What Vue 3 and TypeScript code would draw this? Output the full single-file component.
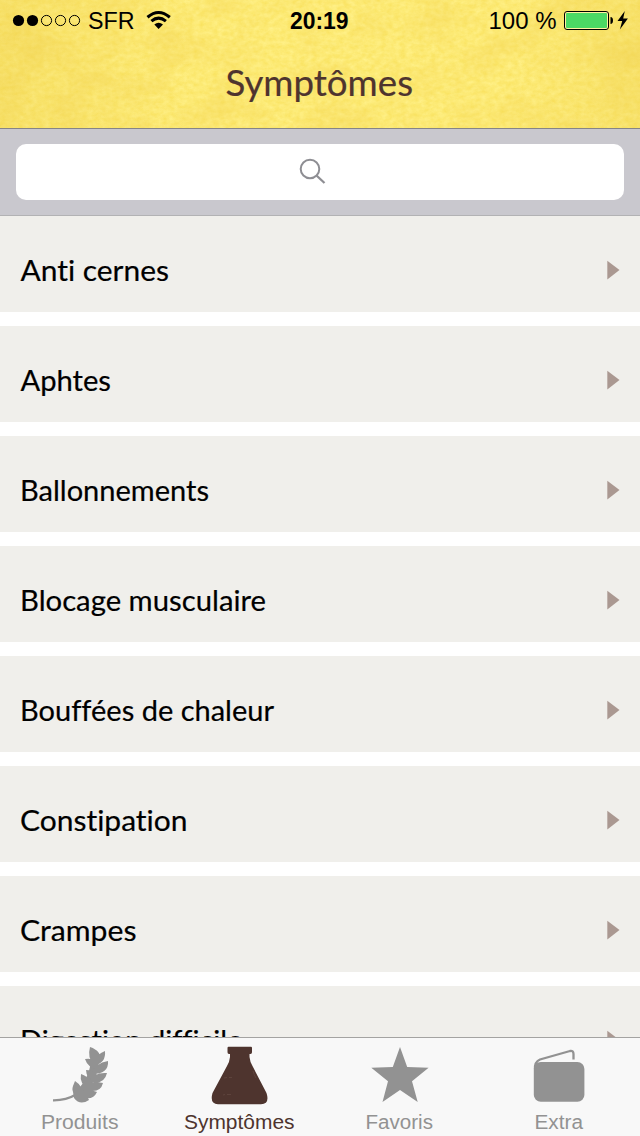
<script setup lang="ts">
interface Row {
  label: string
  x: number
  width: number
}

const rows: Row[] = [
  { label: 'Anti cernes', x: 20.5, width: 148.5 },
  { label: 'Aphtes', x: 20.5, width: 90.5 },
  { label: 'Ballonnements', x: 20, width: 189 },
  { label: 'Blocage musculaire', x: 20, width: 246 },
  { label: 'Bouffées de chaleur', x: 20, width: 254 },
  { label: 'Constipation', x: 20, width: 167.5 },
  { label: 'Crampes', x: 20, width: 116.5 },
  { label: 'Digestion difficile', x: 20, width: 222.5 },
]
</script>

<template>
  <div class="screen">
    <header class="header">
      <svg class="paper" width="640" height="128" aria-hidden="true">
        <defs>
          <filter id="grain" x="0" y="0" width="100%" height="100%" color-interpolation-filters="sRGB">
            <feTurbulence type="fractalNoise" baseFrequency="0.16 0.22" numOctaves="4" seed="8" />
            <feColorMatrix values="0.03 0 0 0 0.975  0.07 0 0 0 0.883  0.2 0 0 0 0.36  0 0 0 0 1" />
          </filter>
          <filter id="mottle" x="0" y="0" width="100%" height="100%" color-interpolation-filters="sRGB">
            <feTurbulence type="fractalNoise" baseFrequency="0.02 0.03" numOctaves="4" seed="3" />
            <feColorMatrix values="0 0 0 0 0.95  0 0 0 0 0.83  0 0 0 0 0.33  0.9 0 0 0 -0.38" />
          </filter>
          <linearGradient id="edges">
            <stop offset="0" stop-color="#e9c845" stop-opacity=".28" />
            <stop offset=".3" stop-color="#e9c845" stop-opacity="0" />
            <stop offset=".8" stop-color="#e9c845" stop-opacity="0" />
            <stop offset="1" stop-color="#e9c845" stop-opacity=".28" />
          </linearGradient>
        </defs>
        <rect width="640" height="128" filter="url(#grain)" />
        <rect width="640" height="128" filter="url(#mottle)" />
        <rect width="640" height="128" fill="url(#edges)" />
      </svg>
      <svg class="status" width="640" height="40" viewBox="0 0 640 40">
        <circle cx="18.5" cy="20.5" r="5.6" />
        <circle cx="32.5" cy="20.5" r="5.6" />
        <g fill="none" stroke="#000" stroke-width="1">
          <circle cx="46.5" cy="20.5" r="5.1" />
          <circle cx="60.5" cy="20.5" r="5.1" />
          <circle cx="74.5" cy="20.5" r="5.1" />
        </g>
        <text x="88" y="29" textLength="46.500" lengthAdjust="spacingAndGlyphs">SFR</text>
        <g fill="none" stroke="#000" stroke-width="3.1">
          <path d="M147.500 17.200Q158.500 7.800 169.800 17.200" />
          <path d="M151.400 21.100Q158.600 15.200 165.900 21.100" />
        </g>
        <path d="M154.300 24.500Q158.600 21.200 163 24.500L158.600 29Z" />
        <text class="clock" x="290" y="29" textLength="58.500" lengthAdjust="spacingAndGlyphs">20:19</text>
        <text x="488.500" y="29" textLength="68" lengthAdjust="spacingAndGlyphs">100 %</text>
        <rect x="564.500" y="11.500" width="44" height="18" rx="2.500" fill="#fff3a0" stroke="#000" />
        <rect x="566" y="13" width="41" height="15" rx="1" fill="#4cd964" />
        <path d="M610.500 17q2.500 .4 2.500 3.500t-2.500 3.500z" />
        <path d="M624.800 11L617.500 21H622.200L619.900 29.500L627.900 18.600H623.200Z" />
      </svg>
      <svg class="title" width="640" height="88" viewBox="0 0 640 88">
        <text x="225.500" y="56.300" textLength="187.500" lengthAdjust="spacingAndGlyphs">Symptômes</text>
      </svg>
    </header>

    <div class="search">
      <div class="field">
        <svg width="28" height="28" viewBox="0 0 28 28" fill="none" stroke="#8e8e93" stroke-width="2">
          <circle cx="11" cy="11" r="9.300" />
          <path d="M17.500 17.500L25.500 25" stroke-width="2.300" />
        </svg>
      </div>
    </div>

    <main class="list">
      <div v-for="row in rows" :key="row.label" class="row">
        <svg width="560" height="96" viewBox="0 0 560 96">
          <text :x="row.x" y="64.700" :textLength="row.width" lengthAdjust="spacingAndGlyphs">{{ row.label }}</text>
        </svg>
        <svg class="arrow" width="13" height="20" viewBox="0 0 13 20">
          <path d="M.300 .800L12.500 10L.300 19.400Z" fill="#aa9891" />
        </svg>
      </div>
    </main>

    <nav class="tabs">
      <div class="tab">
        <svg width="160" height="98" viewBox="0 0 160 98">
          <path d="M53 62.300Q66 62.500 76 56.500" fill="none" stroke="#929292" stroke-width="2.200" />
          <path d="M76 58Q92 46 95 24" fill="none" stroke="#929292" stroke-width="8" />
          <path d="M90 9Q102 13 100 23L94 27Q87 20 90 9ZM105 13Q106 25 95 27Q94 17 105 13ZM85 21Q98 19 99 31Q88 31 85 21ZM108 23Q109 36 92 36Q95 25 108 23ZM86 32Q99 32 97 43Q86 42 86 32ZM107 35Q104 48 88 44Q94 34 107 35ZM81 36Q94 41 89 51Q79 46 81 36ZM103 45Q100 57 83 51Q90 42 103 45ZM75 43Q85 49 82 60Q70 56 73 48ZM97 54Q92 65 77 57Q84 49 97 54ZM73 54Q86 52 89 62Q80 68 74 60Z" fill="#929292" />
          <text x="41" y="91" textLength="77.500" lengthAdjust="spacingAndGlyphs">Produits</text>
        </svg>
      </div>
      <div class="tab active">
        <svg width="160" height="98" viewBox="0 0 160 98">
          <g transform="translate(0 -1)">
            <path d="M68.500 9.700H91Q92 9.700 92 11V15.300Q92 17 90.500 17H89.500V20Q90 25 92.500 29L106.500 56Q110 67 101 67.300H58Q49.500 67 52.500 56L67 29Q69.500 25 70 20V17H69Q67.500 17 67.500 15.300V11Q67.500 9.700 68.500 9.700Z" fill="#4e342e" />
            <path d="M64 41l3-.5M69 40.500h3M63 58l2-.5M67 57.500h4M93 34q1 4 3 7" fill="none" stroke="#614840" stroke-width=".8" />
          </g>
          <text x="24" y="91" textLength="110.500" lengthAdjust="spacingAndGlyphs">Symptômes</text>
        </svg>
      </div>
      <div class="tab">
        <svg width="160" height="98" viewBox="0 0 160 98">
          <path d="M80 9L87.200 29L108.600 29.800L92 43.200L97.700 64L80 52L62.500 64L68 43.200L51.300 29.800L72.800 29Z" fill="#929292" />
          <text x="45.500" y="91" textLength="67.500" lengthAdjust="spacingAndGlyphs">Favoris</text>
        </svg>
      </div>
      <div class="tab">
        <svg width="160" height="98" viewBox="0 0 160 98">
          <rect x="53.800" y="24" width="50.600" height="39.800" rx="7" fill="#929292" />
          <path d="M55 31Q54.500 24 60 21.500L90 13Q93.500 12.300 93.500 16V21.500" fill="none" stroke="#929292" stroke-width="2.300" />
          <text x="54.500" y="91" textLength="48.500" lengthAdjust="spacingAndGlyphs">Extra</text>
        </svg>
      </div>
    </nav>
  </div>
</template>

<style>
body { margin: 0; overflow: hidden; }
</style>

<style scoped>
.screen {
  display: flex;
  flex-direction: column;
  width: 640px;
  height: 1136px;
  overflow: hidden;
  background: #fff;
}
svg { display: block; flex: none; }
.header {
  position: relative;
  flex: none;
  box-sizing: border-box;
  height: 129px;
  border-bottom: 1px solid #858487;
}
.paper { position: absolute; inset: 0; }
.status, .title { position: relative; }
.status text { font: 23.500px "Liberation Sans", Arial, sans-serif; }
.status .clock { font-weight: 700; }
.title text {
  font: 37.500px Lato, sans-serif;
  fill: #4e342e;
  stroke: #4e342e;
  stroke-width: .2px;
}
.search {
  flex: none;
  box-sizing: border-box;
  height: 87px;
  padding: 15px 16px;
  background: #c9c8ce;
  border-bottom: 1px solid #b2b2b4;
}
.field {
  display: flex;
  align-items: center;
  justify-content: center;
  height: 56px;
  padding-right: 14px;
  border-radius: 10px;
  box-sizing: border-box;
  background: #fff;
}
.list {
  display: flex;
  flex: 1;
  min-height: 0;
  flex-direction: column;
  gap: 14px;
  overflow: hidden;
}
.row {
  display: flex;
  flex: none;
  align-items: center;
  justify-content: space-between;
  box-sizing: border-box;
  height: 96px;
  padding-right: 20px;
  background: #f0efeb;
}
.row text {
  font: 29.500px Lato, sans-serif;
  font-variant-ligatures: none;
  stroke: #000;
  stroke-width: .2px;
}
.arrow { margin-top: 12px; }
.tabs {
  display: flex;
  flex: none;
  height: 98px;
  border-top: 1px solid #a4a3a1;
  background: #f8f8f8;
}
.tab { width: 160px; }
.tab text {
  font: 20px "Liberation Sans", Arial, sans-serif;
  fill: #929292;
}
.tab.active text { fill: #4e342e; }
</style>
